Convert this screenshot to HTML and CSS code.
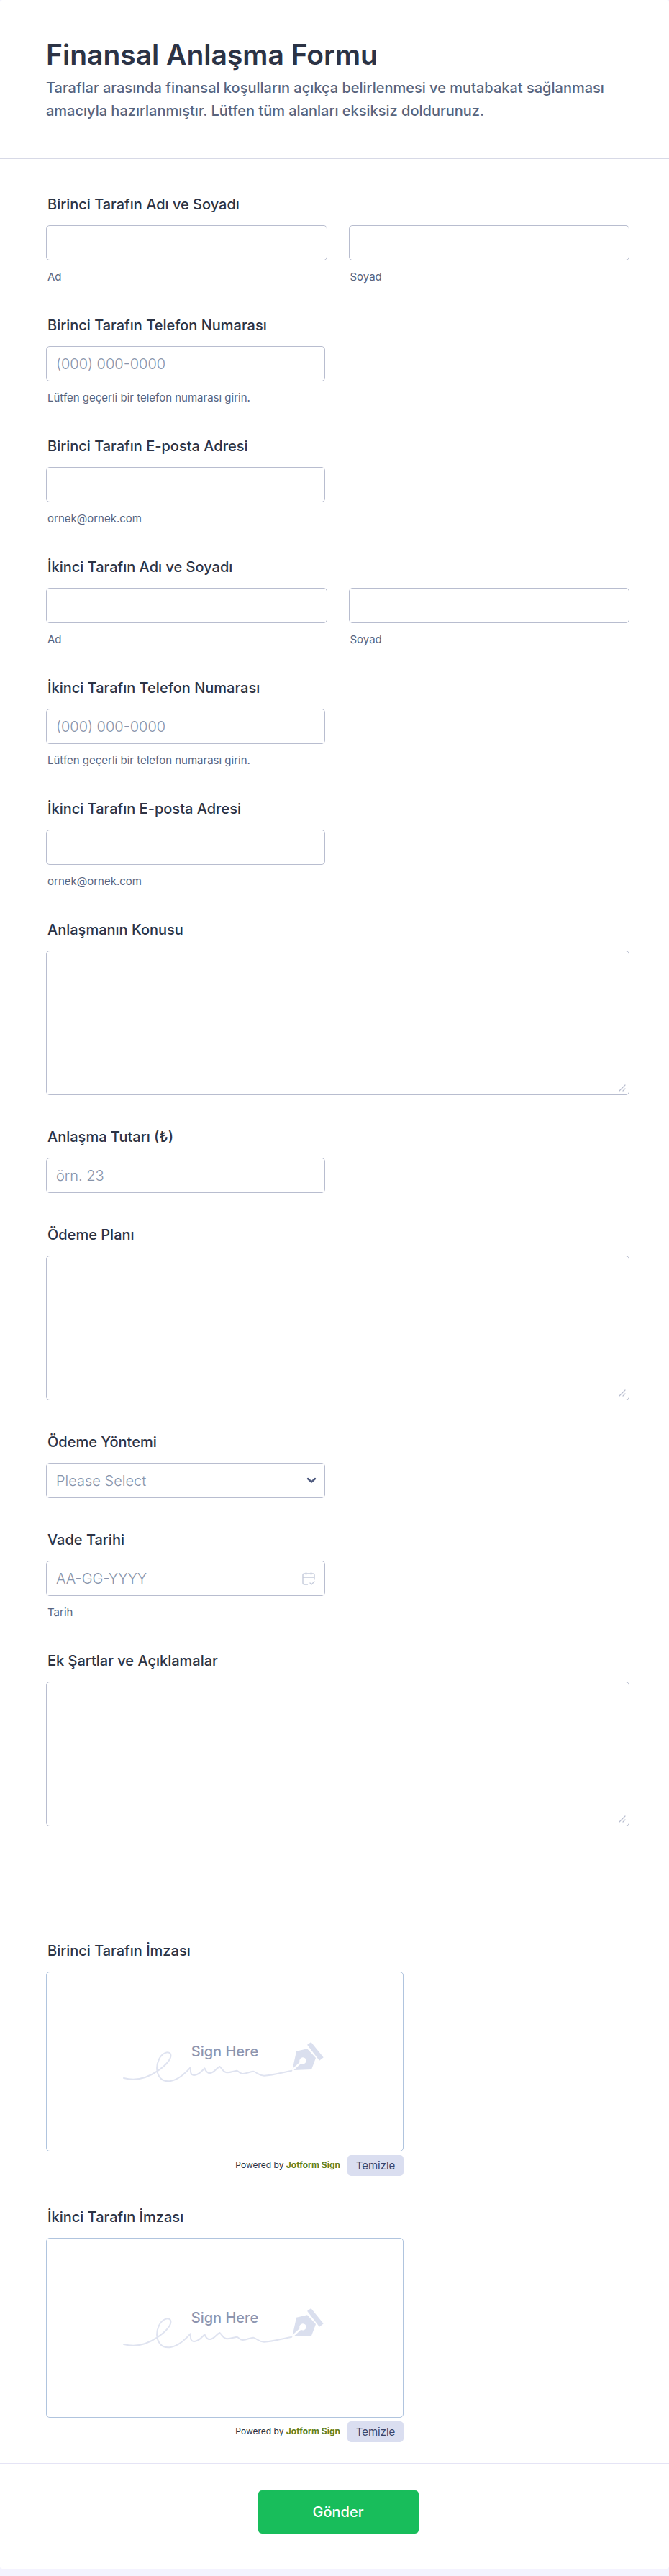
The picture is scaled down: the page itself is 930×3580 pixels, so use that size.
FILE: index.html
```html
<!DOCTYPE html>
<html lang="tr">
<head>
    <meta charset="UTF-8">
    <title>Finansal Anlaşma Formu</title>
    <link rel="stylesheet" href="styles.css">
</head>
<body>
<svg class="defs" aria-hidden="true">
    <!-- imza alanının arka planı -->
    <symbol id="sign-art" viewBox="60 80 856 174">
        <path d="M66 236C108 247 158 240 206 207C250 178 268 150 261 135C253 122 226 131 213 158C200 186 202 216 219 236C240 257 275 251 306 228C324 214 336 202 344 192C346 204 342 222 358 224C378 226 392 206 404 195C408 206 414 216 427 215C446 213 454 192 467 188C477 196 480 211 496 213C512 214 525 207 538 205C547 208 549 217 562 218C579 219 592 208 607 208C622 212 630 226 652 226C690 224 730 212 767 205" fill="none" stroke="#dfe3f0" stroke-width="6" stroke-linecap="round" stroke-linejoin="round"/>
        <path d="M787 124L832 114L868 152L850 200L776 203L806 175A14 14 0 1 0 801 169L771 197Z" fill="#dadfee"/>
        <path d="M832 97L848 86L900 150L883 163Z" fill="#dadfee"/>
    </symbol>
    <!-- metin kutusu boyutlandırma tutamacı -->
    <symbol id="grip" viewBox="0 0 10 10">
        <path d="M1 9L9 1M6 9L9 6" fill="none" stroke="#b8bdcf" stroke-width="1.200" stroke-linecap="round"/>
    </symbol>
</svg>
<form class="form">
    <header class="form-header">
        <h1>Finansal Anlaşma Formu</h1>
        <p>Taraflar arasında finansal koşulların açıkça belirlenmesi ve mutabakat sağlanması amacıyla hazırlanmıştır. Lütfen tüm alanları eksiksiz doldurunuz.</p>
    </header>
    <div class="form-body">
        <div class="field" role="group" aria-labelledby="name1">
            <span class="label" id="name1">Birinci Tarafın Adı ve Soyadı</span>
            <div class="pair">
                <div>
                    <input class="input" type="text" id="first1">
                    <label class="sub" for="first1">Ad</label>
                </div>
                <div>
                    <input class="input" type="text" id="last1">
                    <label class="sub" for="last1">Soyad</label>
                </div>
            </div>
        </div>
        <div class="field">
            <label class="label" for="phone1">Birinci Tarafın Telefon Numarası</label>
            <input class="input half" type="tel" id="phone1" placeholder="(000) 000-0000">
            <span class="sub">Lütfen geçerli bir telefon numarası girin.</span>
        </div>
        <div class="field">
            <label class="label" for="mail1">Birinci Tarafın E-posta Adresi</label>
            <input class="input half" type="email" id="mail1">
            <span class="sub">ornek@ornek.com</span>
        </div>
        <div class="field" role="group" aria-labelledby="name2">
            <span class="label" id="name2">İkinci Tarafın Adı ve Soyadı</span>
            <div class="pair">
                <div>
                    <input class="input" type="text" id="first2">
                    <label class="sub" for="first2">Ad</label>
                </div>
                <div>
                    <input class="input" type="text" id="last2">
                    <label class="sub" for="last2">Soyad</label>
                </div>
            </div>
        </div>
        <div class="field">
            <label class="label" for="phone2">İkinci Tarafın Telefon Numarası</label>
            <input class="input half" type="tel" id="phone2" placeholder="(000) 000-0000">
            <span class="sub">Lütfen geçerli bir telefon numarası girin.</span>
        </div>
        <div class="field">
            <label class="label" for="mail2">İkinci Tarafın E-posta Adresi</label>
            <input class="input half" type="email" id="mail2">
            <span class="sub">ornek@ornek.com</span>
        </div>
        <div class="field">
            <label class="label" for="subject">Anlaşmanın Konusu</label>
            <div class="with-icon">
                <textarea class="input area" id="subject"></textarea>
                <svg class="grip"><use href="#grip"/></svg>
            </div>
        </div>
        <div class="field">
            <label class="label" for="amount">Anlaşma Tutarı (₺)</label>
            <input class="input half" type="text" inputmode="decimal" id="amount" placeholder="örn. 23">
        </div>
        <div class="field">
            <label class="label" for="plan">Ödeme Planı</label>
            <div class="with-icon">
                <textarea class="input area" id="plan"></textarea>
                <svg class="grip"><use href="#grip"/></svg>
            </div>
        </div>
        <div class="field">
            <label class="label" for="method">Ödeme Yöntemi</label>
            <div class="with-icon half">
                <select class="input" id="method">
                    <option value="">Please Select</option>
                    <option>Nakit</option>
                    <option>Banka Havalesi</option>
                    <option>Kredi Kartı</option>
                </select>
                <svg class="chevron" width="14" height="9" viewBox="0 0 14 9"><path d="M2 2L7 6.500L12 2" fill="none" stroke="#4f5b7f" stroke-width="2.500" stroke-linecap="round" stroke-linejoin="round"/></svg>
            </div>
        </div>
        <div class="field">
            <label class="label" for="due">Vade Tarihi</label>
            <div class="with-icon half">
                <input class="input" type="text" id="due" placeholder="AA-GG-YYYY">
                <button class="calendar" type="button" aria-label="Takvim">
                    <svg width="18" height="20" viewBox="0 0 18 20" fill="none" stroke="#c5cbdb" stroke-width="1.400" stroke-linecap="round" stroke-linejoin="round"><path d="M7.500 18H3A2 2 0 0 1 1 16V5A2 2 0 0 1 3 3H15A2 2 0 0 1 17 5V11M1 8H17M5.500 1V4.500M12.500 1V4.500M11 16L13 18L17 14"/></svg>
                </button>
            </div>
            <span class="sub">Tarih</span>
        </div>
        <div class="field">
            <label class="label" for="notes">Ek Şartlar ve Açıklamalar</label>
            <div class="with-icon">
                <textarea class="input area" id="notes"></textarea>
                <svg class="grip"><use href="#grip"/></svg>
            </div>
        </div>
        <div class="spacer"></div>
        <div class="field signature" role="group" aria-labelledby="sign1">
            <span class="label" id="sign1">Birinci Tarafın İmzası</span>
            <div class="pad">
                <svg class="art"><use href="#sign-art"/></svg>
                <span class="pad-text">Sign Here</span>
            </div>
            <div class="pad-foot">
                <span class="powered">Powered by <b>Jotform Sign</b></span>
                <button class="clear" type="button">Temizle</button>
            </div>
        </div>
        <div class="field signature" role="group" aria-labelledby="sign2">
            <span class="label" id="sign2">İkinci Tarafın İmzası</span>
            <div class="pad">
                <svg class="art"><use href="#sign-art"/></svg>
                <span class="pad-text">Sign Here</span>
            </div>
            <div class="pad-foot">
                <span class="powered">Powered by <b>Jotform Sign</b></span>
                <button class="clear" type="button">Temizle</button>
            </div>
        </div>
    </div>
    <div class="form-footer">
        <button class="submit" type="submit">Gönder</button>
    </div>
</form>
</body>
</html>
```

FILE: styles.css
```css
* {
    box-sizing: border-box;
}
body {
    margin: 0;
    padding-bottom: 10px;
    background: #f3f3fe;
    color: #2c3345;
    font-family: Inter, "Liberation Sans", sans-serif;
}
button, input, select, textarea {
    font-family: inherit;
}
.defs {
    position: absolute;
    width: 0;
    height: 0;
}
.form {
    background: #fff;
    border-radius: 4px;
}
.form-header {
    padding: 52px 64px 50px;
    border-bottom: 1px solid #d7d9e6;
}
.form-header h1 {
    margin: 0;
    font-size: 39px;
    line-height: 48px;
    font-weight: 600;
}
.form-header p {
    margin: 6px 0 0;
    color: #57647e;
    font-size: 20px;
    line-height: 32px;
    font-weight: 500;
}
.form-body {
    padding: 51px 55px 0 64px;
}
.field {
    display: flex;
    flex-direction: column;
    margin-bottom: 46px;
}
.label {
    margin: 0 2px 17px;
    font-size: 20px;
    line-height: 24px;
    font-weight: 500;
}
.pair {
    display: grid;
    grid-template-columns: 1fr 1fr;
    gap: 30px;
}
.input {
    display: block;
    width: 100%;
    height: 49px;
    padding: 0 13px;
    background: #fff;
    border: 1px solid #b8bdcf;
    border-radius: 5px;
    color: #2c3345;
    font-size: 20px;
}
.input::placeholder {
    color: #8894ab;
    font-weight: 300;
    opacity: 1;
}
.half {
    width: 388px;
    max-width: 100%;
}
.area {
    height: 201px;
    padding: 12px 13px;
    resize: vertical;
}
.area::-webkit-resizer {
    display: none;
}
.grip {
    position: absolute;
    right: 5px;
    bottom: 5px;
    width: 10px;
    height: 10px;
    pointer-events: none;
}
.sub {
    display: block;
    margin: 14px 2px 0;
    color: #57647e;
    font-size: 15px;
    line-height: 18px;
}
.with-icon {
    position: relative;
}
select.input {
    appearance: none;
    color: #8894ab;
    font-weight: 300;
}
.chevron {
    position: absolute;
    right: 12px;
    top: 20px;
    pointer-events: none;
}
.calendar {
    position: absolute;
    right: 14px;
    top: 15px;
    padding: 0;
    border: 0;
    background: none;
    line-height: 0;
}
.spacer {
    height: 115px;
}
.signature {
    width: 497px;
    max-width: 100%;
    margin-bottom: 45px;
}
.pad {
    display: grid;
    place-items: center;
    height: 250px;
    border: 1px solid #b0c4de;
    border-radius: 5px;
}
.art, .pad-text {
    grid-area: 1 / 1;
}
.art {
    width: 285px;
    height: 58px;
}
.pad-text {
    padding-bottom: 28px;
    color: #8d95b0;
    font-size: 20px;
    line-height: 24px;
    font-weight: 500;
}
.pad-foot {
    display: flex;
    justify-content: flex-end;
    gap: 10px;
    margin-top: 5px;
}
.powered {
    font-size: 12px;
    line-height: 27px;
}
.powered b {
    color: #63801a;
}
.clear {
    width: 78px;
    height: 29px;
    padding: 0;
    border: 0;
    border-radius: 5px;
    background: #dadef0;
    color: #39466b;
    font-size: 15px;
}
.form-footer {
    display: flex;
    justify-content: center;
    margin-top: -16px;
    padding: 37px 54px 49px 64px;
    border-top: 1px solid #e4e4f5;
}
.submit {
    width: 223px;
    height: 60px;
    border: 0;
    border-radius: 5px;
    background: #18bd5b;
    color: #fff;
    font-size: 20px;
    font-weight: 500;
}
```
